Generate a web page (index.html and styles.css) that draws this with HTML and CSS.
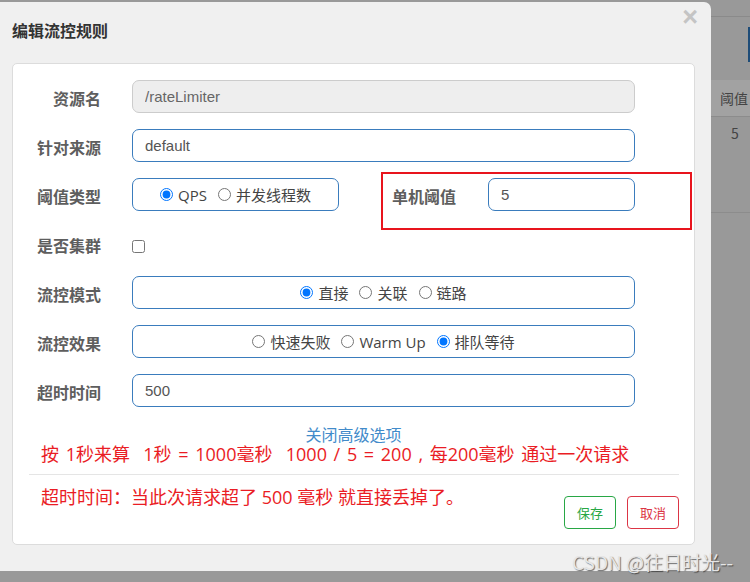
FILE: index.html
```html
<!DOCTYPE html>
<html lang="zh-CN">
<head>
<meta charset="utf-8">
<title>编辑流控规则</title>
<link rel="stylesheet" href="styles.css">
</head>
<body>
<div class="screen">
  <div class="modal">
    <div class="modal-header">
      <h4 class="modal-title">编辑流控规则</h4>
      <button class="close" type="button">×</button>
    </div>
    <div class="card">
      <div class="row">
        <label class="label">资源名</label>
        <input class="input disabled wide" value="/rateLimiter" disabled>
      </div>
      <div class="row">
        <label class="label">针对来源</label>
        <input class="input wide" value="default">
      </div>
      <div class="row row-annotated">
        <label class="label">阈值类型</label>
        <div class="input radios small">
          <label class="opt"><input type="radio" name="grade" checked>QPS</label>
          <label class="opt"><input type="radio" name="grade">并发线程数</label>
        </div>
        <label class="label2">单机阈值</label>
        <input class="input count" value="5">
        <div class="annotation"></div>
      </div>
      <div class="row">
        <label class="label">是否集群</label>
        <input type="checkbox" class="check">
      </div>
      <div class="row">
        <label class="label">流控模式</label>
        <div class="input radios wide">
          <label class="opt"><input type="radio" name="mode" checked>直接</label>
          <label class="opt"><input type="radio" name="mode">关联</label>
          <label class="opt"><input type="radio" name="mode">链路</label>
        </div>
      </div>
      <div class="row">
        <label class="label">流控效果</label>
        <div class="input radios wide">
          <label class="opt"><input type="radio" name="effect">快速失败</label>
          <label class="opt"><input type="radio" name="effect">Warm Up</label>
          <label class="opt"><input type="radio" name="effect" checked>排队等待</label>
        </div>
      </div>
      <div class="row last">
        <label class="label">超时时间</label>
        <input class="input wide" value="500">
      </div>
      <div class="advanced"><a class="link">关闭高级选项</a></div>
      <p class="note note1">按 1秒来算&nbsp; 1秒 = 1000毫秒&nbsp; 1000 / 5 = 200 , 每200毫秒 通过一次请求</p>
      <div class="footer">
        <p class="note note2">超时时间：当此次请求超了 500 毫秒 就直接丢掉了。</p>
        <button class="btn btn-save" type="button">保存</button>
        <button class="btn btn-cancel" type="button">取消</button>
      </div>
    </div>
  </div>
  <div class="strip">
    <div class="strip-top"><span class="strip-bar"></span></div>
    <div class="strip-th">阈值</div>
    <div class="strip-td">5</div>
  </div>
  <div class="watermark">CSDN @往日时光--</div>
</div>
</body>
</html>
```

FILE: styles.css
```css
* { box-sizing: border-box; }
html, body { margin: 0; padding: 0; }
body {
  background: #999999;
  font-family: "Noto Sans CJK SC", "Noto Sans", sans-serif;
  width: 750px;
  height: 582px;
  overflow: hidden;
}
.screen {
  position: relative;
  display: flex;
  align-items: flex-start;
  height: 582px;
  padding-top: 2px;
}
.modal {
  width: 711px;
  height: 569px;
  flex: none;
  background: #f0f0f0;
  border-top-right-radius: 7px;
}
.modal-header {
  display: flex;
  justify-content: space-between;
  align-items: flex-start;
  padding: 0 13px 0 12px;
  height: 61px;
}
.modal-title {
  margin: 17px 0 0 0;
  font-size: 16px;
  line-height: 22px;
  font-weight: bold;
  color: #333333;
}
.close {
  margin: 1px 0 0 0;
  padding: 0;
  border: 0;
  background: none;
  font-family: "Liberation Sans", sans-serif;
  font-size: 27px;
  line-height: 28px;
  font-weight: bold;
  color: #c4c4c4;
}
.card {
  margin: 0 16px 0 12px;
  height: 482px;
  background: #ffffff;
  border: 1px solid #dcdcdc;
  border-radius: 5px;
  padding-top: 16px;
}
.row {
  position: relative;
  display: flex;
  align-items: center;
  height: 33px;
  margin-bottom: 16px;
}
.row.last { margin-bottom: 0; }
.label {
  width: 88px;
  margin-right: 31px;
  text-align: right;
  font-size: 16px;
  font-weight: bold;
  color: #5e5e5e;
  line-height: 20px;
  padding-top: 3px;
}
.label2 {
  margin-left: 53px;
  margin-right: 32px;
  font-size: 16px;
  font-weight: bold;
  color: #5e5e5e;
  line-height: 20px;
  padding-top: 3px;
}
.input {
  height: 33px;
  border: 1px solid #3a7cbd;
  border-radius: 7px;
  background: #ffffff;
  padding: 0 12px;
  font-family: "Liberation Sans", "Noto Sans CJK SC", sans-serif;
  font-size: 15px;
  color: #555555;
  outline: none;
}
.input.disabled {
  background: #eeeeee;
  border-color: #cccccc;
  color: #666666;
}
.wide { width: 503px; }
.small { width: 207px; }
.count { width: 147px; }
.radios {
  display: flex;
  justify-content: center;
  align-items: center;
  gap: 11px;
  padding: 0;
  font-family: "Open Sans", "Noto Sans CJK SC", sans-serif;
  color: #444444;
}
.opt {
  display: flex;
  align-items: center;
  font-size: 15px;
  line-height: 18px;
}
.opt input {
  margin: 0 5px 0 0;
  width: 13px;
  height: 13px;
}
.check {
  margin: 6px 0 0 0;
  width: 13px;
  height: 13px;
}
.annotation {
  position: absolute;
  left: 368px;
  top: -6px;
  width: 311px;
  height: 58px;
  border: 2px solid #e8141d;
  pointer-events: none;
}
.advanced {
  text-align: center;
  margin-top: 19px;
  height: 16px;
  line-height: 16px;
}
.link {
  display: inline-block;
  font-size: 16px;
  line-height: 16px;
  color: #428bca;
}
.note {
  margin: 0;
  color: #ea1c24;
  font-size: 18px;
  line-height: 20px;
  font-family: "Open Sans", "Noto Sans CJK SC", sans-serif;
}
.note1 {
  padding-left: 28px;
  padding-top: 3px;
  line-height: 18px;
  height: 32px;
  word-spacing: 2px;
}
.footer {
  display: flex;
  align-items: flex-start;
  margin: 0 15px 0 16px;
  border-top: 1px solid #e5e5e5;
  padding-top: 12px;
}
.note2 {
  flex: 1;
  padding-left: 12px;
}
.btn {
  width: 52px;
  height: 33px;
  margin-top: 9px;
  background: #ffffff;
  border: 1px solid;
  border-radius: 4px;
  font-family: "Noto Sans CJK SC", sans-serif;
  font-size: 13px;
  padding: 0;
}
.btn-save { border-color: #28a745; color: #28a745; }
.btn-cancel { border-color: #dc3545; color: #dc3545; margin-left: 11px; }
.strip {
  flex: 1;
  padding-top: 14px;
  color: #444444;
  font-size: 14px;
}
.strip-top {
  height: 64px;
  border-top: 1px solid #8a8a8a;
  display: flex;
  justify-content: flex-end;
  padding-top: 10px;
}
.strip-bar {
  width: 2px;
  height: 35px;
  background: #1e4c78;
}
.strip-th {
  height: 37px;
  background: #a2a2a2;
  border-bottom: 1px solid #8c8c8c;
  padding-left: 9px;
  line-height: 36px;
}
.strip-td {
  height: 96px;
  border-bottom: 1px solid #8c8c8c;
  padding-left: 20px;
  padding-top: 6px;
  line-height: 20px;
}
.watermark {
  position: absolute;
  left: 572px;
  top: 550px;
  font-size: 19px;
  line-height: 24px;
  color: #e6e6e6;
  text-shadow: 1px 1px 1px rgba(0, 0, 0, 0.55);
  white-space: nowrap;
}
```
